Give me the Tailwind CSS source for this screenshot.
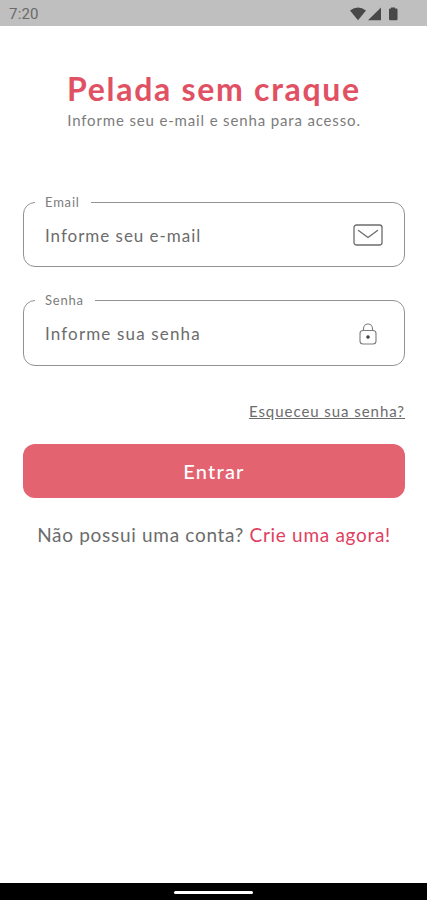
<!doctype html>
<html lang="pt-BR">
    <head>
        <meta charset="UTF-8" />
        <meta name="viewport" content="width=device-width, initial-scale=1.0" />
        <script src="https://cdn.jsdelivr.net/npm/@tailwindcss/browser@4"></script>
        <title>Pelada sem craque</title>
    </head>
    <body class="flex h-[900px] w-[427px] flex-col overflow-hidden bg-white font-[Lato,sans-serif] text-[#6c6c6c]">
        <!-- Status bar -->
        <header class="flex h-[26px] shrink-0 items-center justify-between bg-[#bfbfbf] pt-[2px] pr-[29px] pl-[9px]">
            <span class="font-[Roboto,sans-serif] text-[15px] tracking-[0.2px] text-[#6a6a6a]">7:20</span>
            <svg class="h-[14px] w-[48px] fill-[#484848]" viewBox="0 0 48 14">
                <path d="M0 3.6Q8 -2.4 16 3.6L8 13.2Z" />
                <path d="M18 13.2L31 0.4V13.2Z" />
                <path d="M41 0.4H45V1.6H46.5Q47.5 1.6 47.5 2.6V12.2Q47.5 13.2 46.5 13.2H40Q39 13.2 39 12.2V2.6Q39 1.6 40 1.6H41Z" />
            </svg>
        </header>

        <main class="flex flex-1 flex-col pt-[43px] pr-[22px] pl-[23px]">
            <h1 class="text-center text-[32px] leading-[40px] font-bold tracking-[1.7px] whitespace-nowrap text-[#e05263]">Pelada sem craque</h1>
            <p class="text-center text-[15px] leading-[22px] tracking-[0.85px] whitespace-nowrap text-[#7c7c7c]">Informe seu e-mail e senha para acesso.</p>

            <form class="mt-[63px] flex flex-col">
                <!-- Email -->
                <fieldset class="h-[73px] rounded-[12px] border border-[#929292] pl-[11px]">
                    <legend class="h-[16px] pr-[11px] pl-[10px] text-[13px] leading-[16px] tracking-[0.8px] text-[#7c7c7c]">Email</legend>
                    <div class="flex h-[50px] items-center justify-between pr-[21px] pl-[10px]">
                        <span class="pt-px text-[17px] tracking-[0.97px]">Informe seu e-mail</span>
                        <svg class="h-[22px] w-[30px] fill-none stroke-[#6c6c6c] stroke-[1.3]" viewBox="0 0 30 22">
                            <rect x="1" y="1" width="28" height="20" rx="2.5" />
                            <path d="M5.5 6.5L15 13.5L24.5 6.5" stroke-linecap="round" stroke-linejoin="round" />
                        </svg>
                    </div>
                </fieldset>

                <!-- Senha -->
                <fieldset class="mt-[25px] h-[74px] rounded-[12px] border border-[#929292] pl-[11px]">
                    <legend class="h-[16px] pr-[11px] pl-[10px] text-[13px] leading-[16px] tracking-[0.8px] text-[#7c7c7c]">Senha</legend>
                    <div class="flex h-[51px] items-center justify-between pr-[27px] pl-[10px]">
                        <span class="text-[17px] tracking-[1.15px]">Informe sua senha</span>
                        <svg class="h-[22px] w-[18px] fill-none stroke-[#7c7c7c] stroke-[1.1]" viewBox="0 0 18 22">
                            <rect x="1" y="7.5" width="16" height="13.5" rx="3" />
                            <path d="M4.5 7.5V5.5A4.5 4.5 0 0 1 13.5 5.5V7.5" />
                            <circle cx="9" cy="14" r="1.2" class="fill-[#444444] stroke-[#444444]" />
                        </svg>
                    </div>
                </fieldset>

                <a href="#" class="mt-[35px] self-end text-[15px] leading-[20px] tracking-[0.95px] underline">Esqueceu sua senha?</a>
                <button type="button" class="mt-[23px] h-[54px] rounded-[12px] bg-[#e36370] text-[20px] font-medium tracking-[1.2px] text-white">Entrar</button>
            </form>

            <p class="mt-[25px] text-center text-[19px] leading-[24px] tracking-[0.7px] whitespace-nowrap">Não possui uma conta? <a href="#" class="text-[#e0405f]">Crie uma agora!</a></p>
        </main>

        <!-- Navigation bar -->
        <footer class="flex h-[17px] shrink-0 items-center justify-center bg-black pt-[2px]">
            <div class="h-[3px] w-[79px] rounded-full bg-white"></div>
        </footer>
    </body>
</html>
